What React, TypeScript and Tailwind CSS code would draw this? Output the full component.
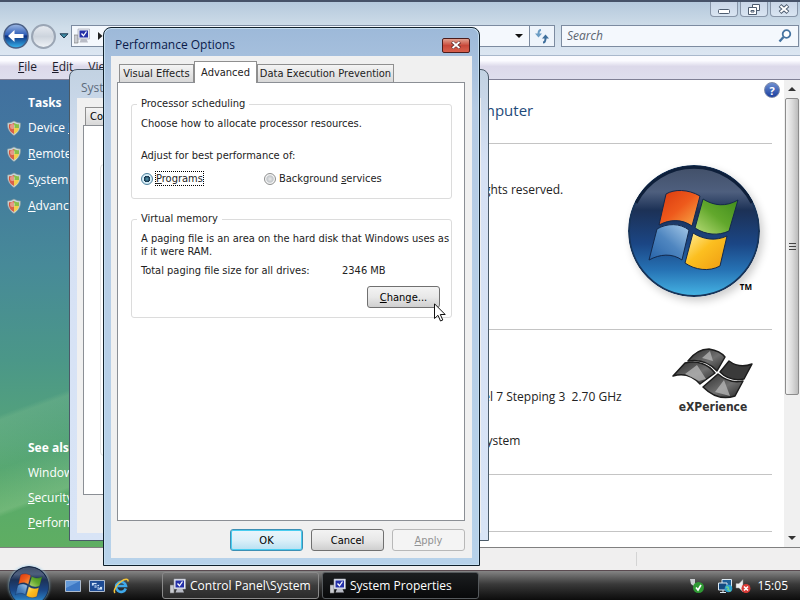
import type { ReactNode } from "react";

const FLAG = {
  red: "M38 29C46 24 60 24 72 31L64 61C54 54 42 54 31 60Z",
  green: "M75 34C86 41 98 42 110 35L101 66C90 71 78 70 67 63Z",
  blue: "M29 64C39 58 52 58 61 65L54 95C44 88 32 89 21 95Z",
  yellow: "M65 68C76 75 88 76 99 71L92 101C81 107 67 105 57 98Z",
};

function Orb({ className, id }: { className: string; id: string }) {
  return (
    <svg viewBox="0 0 132 132" className={className} aria-hidden="true">
      <defs>
        <linearGradient id={`${id}-bg`} x1="0" y1="0" x2="0" y2="1">
          <stop offset="0" stopColor="#414f68" />
          <stop offset=".2" stopColor="#4e5f7e" />
          <stop offset=".34" stopColor="#1c3156" />
          <stop offset=".6" stopColor="#1b4685" />
          <stop offset=".8" stopColor="#2672b4" />
          <stop offset="1" stopColor="#45b4e4" />
        </linearGradient>
        <linearGradient id={`${id}-r`} x1="0" y1="0" x2="1" y2="1">
          <stop offset="0" stopColor="#d8380e" />
          <stop offset=".5" stopColor="#ee5a1c" />
          <stop offset="1" stopColor="#f9b04a" />
        </linearGradient>
        <linearGradient id={`${id}-g`} x1="0" y1="1" x2="1" y2="0">
          <stop offset="0" stopColor="#b9dc78" />
          <stop offset=".5" stopColor="#62a82c" />
          <stop offset="1" stopColor="#3f8c1c" />
        </linearGradient>
        <linearGradient id={`${id}-b`} x1="1" y1="0" x2="0" y2="1">
          <stop offset="0" stopColor="#a8cbea" />
          <stop offset=".5" stopColor="#4f86c0" />
          <stop offset="1" stopColor="#2763a8" />
        </linearGradient>
        <linearGradient id={`${id}-y`} x1="0" y1="0" x2="1" y2="1">
          <stop offset="0" stopColor="#fff0a0" />
          <stop offset=".45" stopColor="#fcbf20" />
          <stop offset="1" stopColor="#ee9a10" />
        </linearGradient>
      </defs>
      <circle cx="66" cy="66" r="65" fill={`url(#${id}-bg)`} stroke="#173459" strokeWidth="2" />
      <path d="M8 38A65 65 0 0 1 124 38" fill="none" stroke="#0e1f3a" strokeWidth="3" />
      <g stroke="#14294c" strokeWidth="1">
        <path d={FLAG.red} fill={`url(#${id}-r)`} />
        <path d={FLAG.green} fill={`url(#${id}-g)`} />
        <path d={FLAG.blue} fill={`url(#${id}-b)`} />
        <path d={FLAG.yellow} fill={`url(#${id}-y)`} />
      </g>
    </svg>
  );
}

function Shield() {
  return (
    <svg viewBox="0 0 16 16" className="size-4 shrink-0" aria-hidden="true">
      <path d="M8 1C10 2 12 3 14.500 3C15 9 12 13 8 15.500C4 13 1 9 1.500 3C4 3 6 2 8 1Z" fill="#c9d6d9" stroke="#7d9399" strokeWidth=".6" />
      <path d="M8 3L8 8H3C3 7 2.800 5.500 3 4.300C5 4.300 6.500 3.800 8 3Z" fill="#d5553b" />
      <path d="M8 3V8H13C13 7 13.200 5.500 13 4.300C11 4.300 9.500 3.800 8 3Z" fill="#8abf48" />
      <path d="M3 8H8V14C5 12.500 3.500 10.500 3 8Z" fill="#d9604a" />
      <path d="M13 8H8V14C11 12.500 12.500 10.500 13 8Z" fill="#f2cf4d" />
      <circle cx="6.500" cy="6.500" r="2.500" fill="#fff" opacity=".4" />
    </svg>
  );
}

function ComputerIcon() {
  return (
    <svg viewBox="0 0 16 16" className="size-4 shrink-0" aria-hidden="true">
      <path d="M0 7H4V15H0Z" fill="#c9ccd2" stroke="#777" strokeWidth=".6" />
      <path d="M4 1H15.500V11H4Z" fill="#e8ebf2" stroke="#9aa0b0" strokeWidth=".6" />
      <path d="M5.500 2.500H14V9.500H5.500Z" fill="#2430a8" />
      <path d="M7.500 5.500L9.500 7.800L12.500 3.500" fill="none" stroke="#fff" strokeWidth="1.300" />
      <path d="M7 11H12.500L14 14.500H5.500Z" fill="#b9bcc6" />
    </svg>
  );
}

function Caption({ label, children }: { label: string; children: ReactNode }) {
  return (
    <button
      type="button"
      aria-label={label}
      className="flex h-[15px] w-7 items-center justify-center rounded-b-sm border border-t-0 border-[#8795a8] bg-linear-to-b from-[#c8d5e6] to-[#d9e5f2]"
    >
      {children}
    </button>
  );
}

function DialogButton({ children, look = "normal" }: { children: ReactNode; look?: "normal" | "default" | "disabled" }) {
  const looks = {
    normal: "border-[#707070] bg-linear-to-b from-[#f3f3f3] via-[#e8e8e8] to-[#cfcfcf] text-black",
    default:
      "border-[#3c8fb4] bg-linear-to-b from-[#eaf5fb] via-[#dcf0f9] to-[#b6e0f2] text-black shadow-[inset_0_0_0_1px_#48cdf0]",
    disabled: "border-[#b8b8b8] bg-[#f4f4f4] text-[#929292]",
  };
  return (
    <button type="button" disabled={look === "disabled"} className={`h-[22px] w-[73px] rounded-[3px] border text-center ${looks[look]}`}>
      {children}
    </button>
  );
}

function Group({ title, className, children }: { title: ReactNode; className: string; children: ReactNode }) {
  return (
    <fieldset className={`rounded-[3px] border border-[#dcdcdc] pl-[9px] ${className}`}>
      <legend className="-ml-1 px-1 leading-[14px]">{title}</legend>
      {children}
    </fieldset>
  );
}

function Option({ name, checked, children }: { name: string; checked?: boolean; children: ReactNode }) {
  return (
    <label className="flex items-center gap-[3px]">
      <input
        type="radio"
        name="scheduling"
        value={name}
        defaultChecked={checked}
        className="size-3 shrink-0 appearance-none rounded-full border border-[#8e8f8f] bg-[radial-gradient(circle,#e8e8e8_0,#c2c6ca_45%,#f4f4f4_60%)] checked:border-[#4b7f9c] checked:bg-[radial-gradient(circle,#5aa0b8_0,#123048_42%,#d6edf7_50%)]"
      />
      <span className={checked ? "outline-1 outline-dotted outline-black" : ""}>{children}</span>
    </label>
  );
}

function PerformanceDialog() {
  return (
    <section
      aria-label="Performance Options"
      className="absolute top-[27px] left-[103px] z-20 flex h-[539px] w-[377px] flex-col rounded-t-lg border border-[#10202c] bg-linear-to-b from-[#9db9d9] via-[#b5cbe4] via-15% to-[#b7d2ea] px-[7px] pb-[7px] font-['DejaVu_Sans_Condensed','Liberation_Sans',sans-serif] text-[11px] leading-[13px] text-[#222] shadow-[inset_0_0_0_1px_#c4ddf0]"
    >
      <header className="flex h-7 shrink-0 items-center justify-between pt-1.5 pr-[2px] pl-1 text-[#0a1a4a]">
        <h2 className="font-['Open_Sans','Noto_Sans',sans-serif] text-xs">Performance Options</h2>
        <button
          type="button"
          aria-label="Close"
          className="flex h-[15px] w-7 items-center justify-center rounded-[2px] border border-[#4b1c1c] bg-linear-to-b from-[#e0a090] via-[#c8483a] to-[#d8604c]"
        >
          <svg viewBox="0 0 10 8" className="h-2 w-2.5" aria-hidden="true">
            <path d="M1 1L9 7M9 1L1 7" stroke="#5b2a2a" strokeWidth="3.200" />
            <path d="M1.500 1L8.500 7M8.500 1L1.500 7" stroke="#fff" strokeWidth="1.800" />
          </svg>
        </button>
      </header>
      <div className="flex min-h-0 flex-1 flex-col bg-[#f0f0f0] pt-[5px] pr-[7px] pb-[7px] pl-[6px]">
        <div role="tablist" className="flex items-end pl-[2px]">
          <button role="tab" aria-selected="false" type="button" className="h-[18px] w-[75px] border border-b-0 border-[#8f8f8f] bg-linear-to-b from-[#f4f4f4] to-[#d8d8d8] whitespace-nowrap">
            Visual Effects
          </button>
          <button role="tab" aria-selected="true" type="button" className="z-10 -mb-px h-[22px] w-[63px] border border-b-0 border-[#8f8f8f] bg-white">
            Advanced
          </button>
          <button role="tab" aria-selected="false" type="button" className="h-[18px] w-[137px] border border-b-0 border-[#8f8f8f] bg-linear-to-b from-[#f4f4f4] to-[#d8d8d8] whitespace-nowrap">
            Data Execution Prevention
          </button>
        </div>
        <div className="flex min-h-0 flex-1 flex-col gap-[13px] border border-[#8b8f95] bg-white pt-[14px] pr-3 pl-[13px]">
          <Group title="Processor scheduling" className="h-[102px]">
            <p className="mt-[6px]">Choose how to allocate processor resources.</p>
            <p className="mt-[19px]">Adjust for best performance of:</p>
            <div className="mt-[10px] grid grid-cols-[123px_auto]">
              <Option name="programs" checked>
                <u>P</u>rograms
              </Option>
              <Option name="background">
                Background <u>s</u>ervices
              </Option>
            </div>
          </Group>
          <Group title="Virtual memory" className="h-[106px]">
            <p className="mt-[6px]">A paging file is an area on the hard disk that Windows uses as if it were RAM.</p>
            <dl className="mt-[6px] flex">
              <dt className="w-[201px]">Total paging file size for all drives:</dt>
              <dd>2346 MB</dd>
            </dl>
            <div className="mt-[9px] flex justify-end pr-[11px]">
              <DialogButton>
                <u>C</u>hange...
              </DialogButton>
            </div>
          </Group>
        </div>
        <footer className="mt-2 flex justify-end gap-2">
          <DialogButton look="default">OK</DialogButton>
          <DialogButton>Cancel</DialogButton>
          <DialogButton look="disabled">
            <u>A</u>pply
          </DialogButton>
        </footer>
      </div>
    </section>
  );
}

function PropertiesWindow() {
  return (
    <section
      aria-label="System Properties"
      className="absolute top-[69px] left-[69px] z-10 flex h-[472px] w-[420px] flex-col rounded-t-lg border border-[#4a5a68] bg-linear-to-b from-[#c2d2e2] via-[#d6e1f4] via-20% to-[#d8e4f6] px-[7px] pb-[7px] text-xs"
    >
      <h2 className="flex h-[28px] shrink-0 items-center pt-2 pl-1 text-[#5d6b7c]">System Properties</h2>
      <div className="flex min-h-0 flex-1 flex-col bg-[#f0f0f0] px-[6px] pt-[9px] pb-[38px] font-['DejaVu_Sans_Condensed','Liberation_Sans',sans-serif] text-[11px]">
        <div className="flex pl-[2px]">
          <button type="button" className="h-[18px] border border-b-0 border-[#8f8f8f] bg-linear-to-b from-[#f4f4f4] to-[#d8d8d8] px-1 leading-none">
            Computer Name
          </button>
        </div>
        <div className="flex-1 border border-[#8b8f95] bg-white px-4 py-[38px]">
          <div className="h-full rounded-sm border border-[#e4e4e4]" />
        </div>
      </div>
    </section>
  );
}

function Cursor() {
  return (
    <svg viewBox="0 0 12 19" className="absolute top-[303px] left-[434px] z-30 h-[19px] w-3" aria-hidden="true">
      <path d="M.5 .8V15.500L4 12.300L6.500 18L8.800 17L6.300 11.500H11.200Z" fill="#fff" stroke="#111" />
    </svg>
  );
}

function Explorer() {
  return (
    <>
      <div className="border-t-2 border-[#465268] bg-linear-to-b from-[#b5c9dc] via-[#d0deea] to-[#dce6f2] pb-[6px]">
        <div className="flex justify-end gap-0.5 pr-0.5">
          <Caption label="Minimize">
            <svg viewBox="0 0 12 6" className="mt-1 h-1.5 w-3" aria-hidden="true">
              <rect x=".5" y="1.500" width="11" height="4" rx="1" fill="#fff" stroke="#4e5d70" />
            </svg>
          </Caption>
          <Caption label="Restore">
            <svg viewBox="0 0 12 11" className="h-[11px] w-3" aria-hidden="true">
              <path d="M4.500 .5H11.500V6.500H4.500Z" fill="#fff" stroke="#4e5d70" />
              <path d="M.5 3.500H8.500V10.500H.5Z" fill="#fff" stroke="#4e5d70" />
              <path d="M3 6.500H6V8H3Z" fill="#fff" stroke="#4e5d70" />
            </svg>
          </Caption>
          <Caption label="Close">
            <svg viewBox="0 0 12 10" className="h-2.5 w-3" aria-hidden="true">
              <path d="M2 1.500L10 8.500M10 1.500L2 8.500" stroke="#4e5d70" strokeWidth="4" />
              <path d="M2.500 2L9.500 8M9.500 2L2.500 8" stroke="#fff" strokeWidth="2" />
            </svg>
          </Caption>
        </div>
        <div className="mt-[6px] flex h-[26px] items-center pr-px pl-[3px]">
          <button type="button" aria-label="Back" className="size-[26px] shrink-0">
            <svg viewBox="0 0 26 26" className="size-full" aria-hidden="true">
              <defs>
                <linearGradient id="back" x1="0" y1="0" x2="0" y2="1">
                  <stop offset="0" stopColor="#9fb9e4" />
                  <stop offset=".45" stopColor="#2f5fb8" />
                  <stop offset=".5" stopColor="#0c2f80" />
                  <stop offset="1" stopColor="#38b8f0" />
                </linearGradient>
              </defs>
              <circle cx="13" cy="13" r="12" fill="url(#back)" stroke="#4a5f85" strokeWidth="1.500" />
              <path d="M5 13L11.500 7V11H20.500V15H11.500V19Z" fill="#fff" />
            </svg>
          </button>
          <button
            type="button"
            aria-label="Forward"
            className="ml-0.5 size-[25px] shrink-0 rounded-full border-2 border-[#9aa5b4] bg-linear-to-b from-[#e6eaf0] via-[#cdd4dd] to-[#eef2f6]"
          />
          <button type="button" aria-label="Recent pages" className="ml-[3px] w-2.5 shrink-0">
            <svg viewBox="0 0 10 6" className="h-1.5 w-full" aria-hidden="true">
              <path d="M1 .8H9L5 5Z" fill="#3f8fa8" stroke="#1f3850" />
            </svg>
          </button>
          <div className="ml-[2px] flex h-[22px] flex-1 items-center border border-[#7c8ba0] bg-[#f4f8fd] pl-0.5">
            <ComputerIcon />
            <svg viewBox="0 0 5 8" className="ml-2 h-2 w-[5px]" aria-hidden="true">
              <path d="M0 0L4.500 4L0 8Z" fill="#222" />
            </svg>
            <button type="button" aria-label="Previous locations" className="mr-1.5 ml-auto">
              <svg viewBox="0 0 8 4" className="h-1 w-2" aria-hidden="true">
                <path d="M0 0H8L4 4Z" fill="#111" />
              </svg>
            </button>
          </div>
          <button type="button" aria-label="Refresh" className="flex h-[22px] w-[25px] items-center justify-center border border-l-0 border-[#7c8ba0] bg-[#eef4fb]">
            <svg viewBox="0 0 16 16" className="size-4" aria-hidden="true">
              <path d="M7 2C5 2 4.500 3.500 4.500 6" fill="none" stroke="#6a9cc4" strokeWidth="2" />
              <path d="M1 5.500H8L4.500 9.500Z" fill="#6a9cc4" />
              <path d="M9 14.500C11 14.500 11.500 12.500 11.500 10" fill="none" stroke="#3f6f9c" strokeWidth="2" />
              <path d="M8 10.500H15L11.500 6.500Z" fill="#3f6f9c" />
            </svg>
          </button>
          <label className="ml-1.5 flex h-[22px] w-[238px] items-center border border-[#7c8ba0] bg-[#f4f8fd] pr-1.5 pl-[5px]">
            <input type="text" aria-label="Search" placeholder="Search" className="min-w-0 flex-1 bg-transparent text-xs italic outline-none placeholder:text-[#5c6470]" />
            <svg viewBox="0 0 14 14" className="size-3.5" aria-hidden="true">
              <circle cx="8.500" cy="5" r="3.800" fill="#fff" stroke="#4573a0" strokeWidth="1.800" />
              <path d="M5.500 8L1.500 12.500" stroke="#4573a0" strokeWidth="2.400" />
            </svg>
          </label>
        </div>
      </div>
      <nav aria-label="Menu" className="flex h-[25px] shrink-0 items-center gap-[15px] border-t border-b border-t-[#a9b8cc] border-b-[#7f7f95] bg-linear-to-b from-[#fbfbff] from-20% via-[#dcd9ea] via-45% to-[#dedeed] pb-0.5 pl-[18px] text-xs text-[#1c1c2c]">
        <button type="button"><u>F</u>ile</button>
        <button type="button"><u>E</u>dit</button>
        <button type="button"><u>V</u>iew</button>
      </nav>
      <div className="flex min-h-0 flex-1">
        <aside className="flex w-[200px] shrink-0 flex-col justify-between bg-[linear-gradient(160deg,transparent_62%,#8cc79440_63%,transparent_72%,#9fd09c50_80%,transparent_81%),linear-gradient(to_bottom,#41709f_0%,#437a9e_20%,#478a98_40%,#4b9788_60%,#56a578_78%,#5aab69_90%,#5fae62_100%)] pt-[13px] pb-[14px] text-xs leading-5 text-white">
          <div>
            <h2 className="pl-7 font-bold">Tasks</h2>
            <ul className="mt-[5px] flex flex-col gap-[6px] pl-[6px]">
              <li className="flex items-center gap-1.5"><Shield /><a href="#device">Device <u>M</u>anager</a></li>
              <li className="flex items-center gap-1.5"><Shield /><a href="#remote"><u>R</u>emote settings</a></li>
              <li className="flex items-center gap-1.5"><Shield /><a href="#protection">S<u>y</u>stem protection</a></li>
              <li className="flex items-center gap-1.5"><Shield /><a href="#advanced"><u>A</u>dvanced system settings</a></li>
            </ul>
          </div>
          <div className="flex flex-col gap-[5px] pl-7">
            <h2 className="font-bold">See also</h2>
            <a href="#update">Windows Update</a>
            <a href="#security"><u>S</u>ecurity Center</a>
            <a href="#performance"><u>P</u>erformance</a>
          </div>
        </aside>
        <main className="flex min-w-0 flex-1 flex-col overflow-hidden bg-white pr-3 pl-[276px] text-xs text-[#222]">
          <div className="-mr-3 flex h-[63px] shrink-0 items-start justify-between pt-[2px] pr-1">
            <h1 className="mt-4 -ml-1 text-[15px] leading-6 text-[#1e4a7a]">omputer</h1>
            <button type="button" aria-label="Help" className="size-4 rounded-full border border-[#7d8aa8] bg-linear-to-b from-[#6f8fd0] to-[#1d3fa0] text-[11px] leading-none font-bold text-white">
              ?
            </button>
          </div>
          <div className="flex h-[186px] shrink-0 justify-between border-t border-[#c4c4c4]">
            <p className="mt-[38px] leading-4">rights reserved.</p>
            <div className="mt-[21px] mr-3 w-[132px]">
              <Orb id="logo" className="size-[132px] rounded-full shadow-[3px_4px_8px_#0003]" />
              <p className="-mt-[18px] mr-2 text-right text-[8px] leading-4 font-bold text-black">TM</p>
            </div>
          </div>
          <div className="flex h-[145px] shrink-0 justify-between border-t border-[#c4c4c4]">
            <div className="mt-[59px] leading-4 whitespace-pre">
              <p>del 7 Stepping 3  2.70 GHz</p>
              <p className="mt-7 pl-1">System</p>
            </div>
            <div className="mt-[17px] mr-[18px] w-[82px]">
              <svg viewBox="0 0 82 52" className="h-[52px] w-full" aria-hidden="true">
                <defs>
                  <linearGradient id="xp" x1="0" y1="0" x2="1" y2="1">
                    <stop offset="0" stopColor="#2a2a2a" />
                    <stop offset=".55" stopColor="#707070" />
                    <stop offset="1" stopColor="#262626" />
                  </linearGradient>
                </defs>
                <g stroke="#1c1c1c" strokeWidth="1.500" strokeLinejoin="round">
                  <path d="M16 14C22 6 28 2 37 2C43 3 49 5 53 10L45 24C37 15 28 12 16 14Z" fill="url(#xp)" />
                  <path d="M1 29L13 16C25 13 36 17 43 26L28 37C20 28 11 26 1 29Z" fill="url(#xp)" />
                  <path d="M57 14C65 20 72 20 80 17L72 32C62 34 54 31 48 25Z" fill="#3a3a3a" />
                  <path d="M46 27C53 33 62 36 71 34L63 49C51 53 40 49 31 40Z" fill="url(#xp)" />
                </g>
                <path d="M13 27L25 18L34 32L27 34Z M43 45L52 33L58 49Z M30 11L38 4L41 14Z" fill="#b8b8b8" opacity=".75" />
              </svg>
              <p className="-mx-2 text-center font-['DejaVu_Sans_Condensed','Liberation_Sans',sans-serif] text-xs leading-4 font-bold text-[#333]">eXPerience</p>
            </div>
          </div>
          <div className="h-[58px] shrink-0 border-y border-[#c4c4c4]" />
        </main>
        <div className="flex w-4 shrink-0 flex-col items-center bg-[#f0f0f0]" aria-hidden="true">
          <svg viewBox="0 0 8 18" className="h-[18px] w-2"><path d="M0 11L4 7L8 11Z" fill="#333" /></svg>
          <div className="flex h-[297px] w-[14px] flex-col items-center justify-center gap-0.5 rounded-xs border border-[#8c8c8c] bg-linear-to-r from-[#f4f4f4] via-[#dcdcdc] to-[#bcbcbc]">
            <i className="h-px w-[7px] bg-[#444]" />
            <i className="h-px w-[7px] bg-[#444]" />
            <i className="h-px w-[7px] bg-[#444]" />
          </div>
          <svg viewBox="0 0 8 18" className="mt-auto h-[18px] w-2"><path d="M0 7L4 11L8 7Z" fill="#333" /></svg>
        </div>
      </div>
      <div className="flex h-[23px] shrink-0 items-end justify-end border-t border-[#808080] bg-[#f0efef]">
        <span className="my-1 w-[164px] self-stretch border-l border-[#d4d4d4]" />
      </div>
    </>
  );
}

function TaskButton({ active, children }: { active?: boolean; children: ReactNode }) {
  return (
    <button
      type="button"
      className={`flex h-[27px] w-[157px] items-center gap-1 rounded-[3px] border px-[7px] whitespace-nowrap ${
        active
          ? "border-[#55595c] bg-linear-to-b from-[#1c1e20] to-[#08090a]"
          : "border-[#8a8a8a] bg-linear-to-b from-[#747474] via-[#3c3c3c] to-[#2a2a2a]"
      }`}
    >
      <ComputerIcon />
      {children}
    </button>
  );
}

function Taskbar() {
  return (
    <footer className="flex h-[30px] shrink-0 items-center border-t border-[#5a4a50] bg-linear-to-b from-[#858585] via-[#3a3a3a] via-45% to-[#0c0c0c] pr-3 text-xs text-white">
      <button type="button" aria-label="Start" className="z-10 -mt-2 ml-[9px] size-10 shrink-0">
        <Orb id="start" className="mt-1 size-10 rounded-full shadow-[0_0_3px_#8fc8e8]" />
      </button>
      <div className="ml-4 flex items-center gap-2">
        <button type="button" aria-label="Show desktop">
          <svg viewBox="0 0 16 14" className="h-3.5 w-4" aria-hidden="true">
            <path d="M.5 1.500H15.500V12.500H.5Z" fill="#3e78c4" stroke="#aebccf" />
            <path d="M1 2H15L1 9Z" fill="#7fb0e8" opacity=".6" />
          </svg>
        </button>
        <button type="button" aria-label="Switch between windows">
          <svg viewBox="0 0 16 14" className="h-3.5 w-4" aria-hidden="true">
            <path d="M.5 1.500H15.500V12.500H.5Z" fill="#1d4b94" stroke="#aebccf" />
            <path d="M2.500 3.500H8V7H2.500Z M5 5.500H10.500V9H5Z M8 7.500H13.500V11H8Z" fill="#cfe2f8" stroke="#1d4b94" strokeWidth=".8" />
          </svg>
        </button>
        <button type="button" aria-label="Internet Explorer">
          <svg viewBox="0 0 16 16" className="size-4" aria-hidden="true">
            <path d="M12.800 10.500A5 5 0 1 1 13 8H4" fill="none" stroke="#3fa9ea" strokeWidth="2.600" />
            <path d="M2 15C0 13 3 7 8 3.500C12 .5 15.500 .5 15 3.500" fill="none" stroke="#f4c53a" strokeWidth="1.500" />
          </svg>
        </button>
      </div>
      <div className="ml-[33px] flex gap-[3px]">
        <TaskButton>Control Panel\System</TaskButton>
        <TaskButton active>System Properties</TaskButton>
      </div>
      <div className="ml-auto flex items-center">
        <svg viewBox="0 0 16 16" className="size-4" aria-hidden="true">
          <path d="M1 1H6V5L9 8L6 9L2 6Z" fill="#c9ccd0" />
          <circle cx="9.500" cy="9.500" r="5.500" fill="#2f9a34" />
          <path d="M7 9.500L9 12L12 7" fill="none" stroke="#fff" strokeWidth="1.600" />
        </svg>
        <svg viewBox="0 0 16 16" className="ml-3 size-4" aria-hidden="true">
          <path d="M5 1.500H14.500V9H5Z" fill="#1f5f98" stroke="#dbe8f2" />
          <path d="M1.500 5H10V12H1.500Z" fill="#154a80" stroke="#dbe8f2" />
          <path d="M3 14.500H9M6 12V14" stroke="#dbe8f2" />
          <circle cx="11.500" cy="10.500" r="3.800" fill="#2b9fd0" />
          <path d="M9 9.500C11 8 12 10 11 11.500L13.500 13" fill="none" stroke="#6dd08a" strokeWidth="1.500" />
        </svg>
        <svg viewBox="0 0 16 16" className="ml-0.5 size-4" aria-hidden="true">
          <path d="M1 5.500H4L8 1.500V14L4 10H1Z" fill="#eef0f2" stroke="#888" strokeWidth=".5" />
          <circle cx="11" cy="10.500" r="4.500" fill="#d93a36" />
          <path d="M9 8.500L13 12.500M13 8.500L9 12.500" stroke="#fff" strokeWidth="1.600" />
        </svg>
        <time className="ml-[6px]">15:05</time>
      </div>
    </footer>
  );
}

export default function App() {
  return (
    <div className="relative flex h-screen flex-col overflow-hidden bg-white font-['Open_Sans','Noto_Sans',sans-serif]">
      <Explorer />
      <Taskbar />
      <PropertiesWindow />
      <PerformanceDialog />
      <Cursor />
    </div>
  );
}
